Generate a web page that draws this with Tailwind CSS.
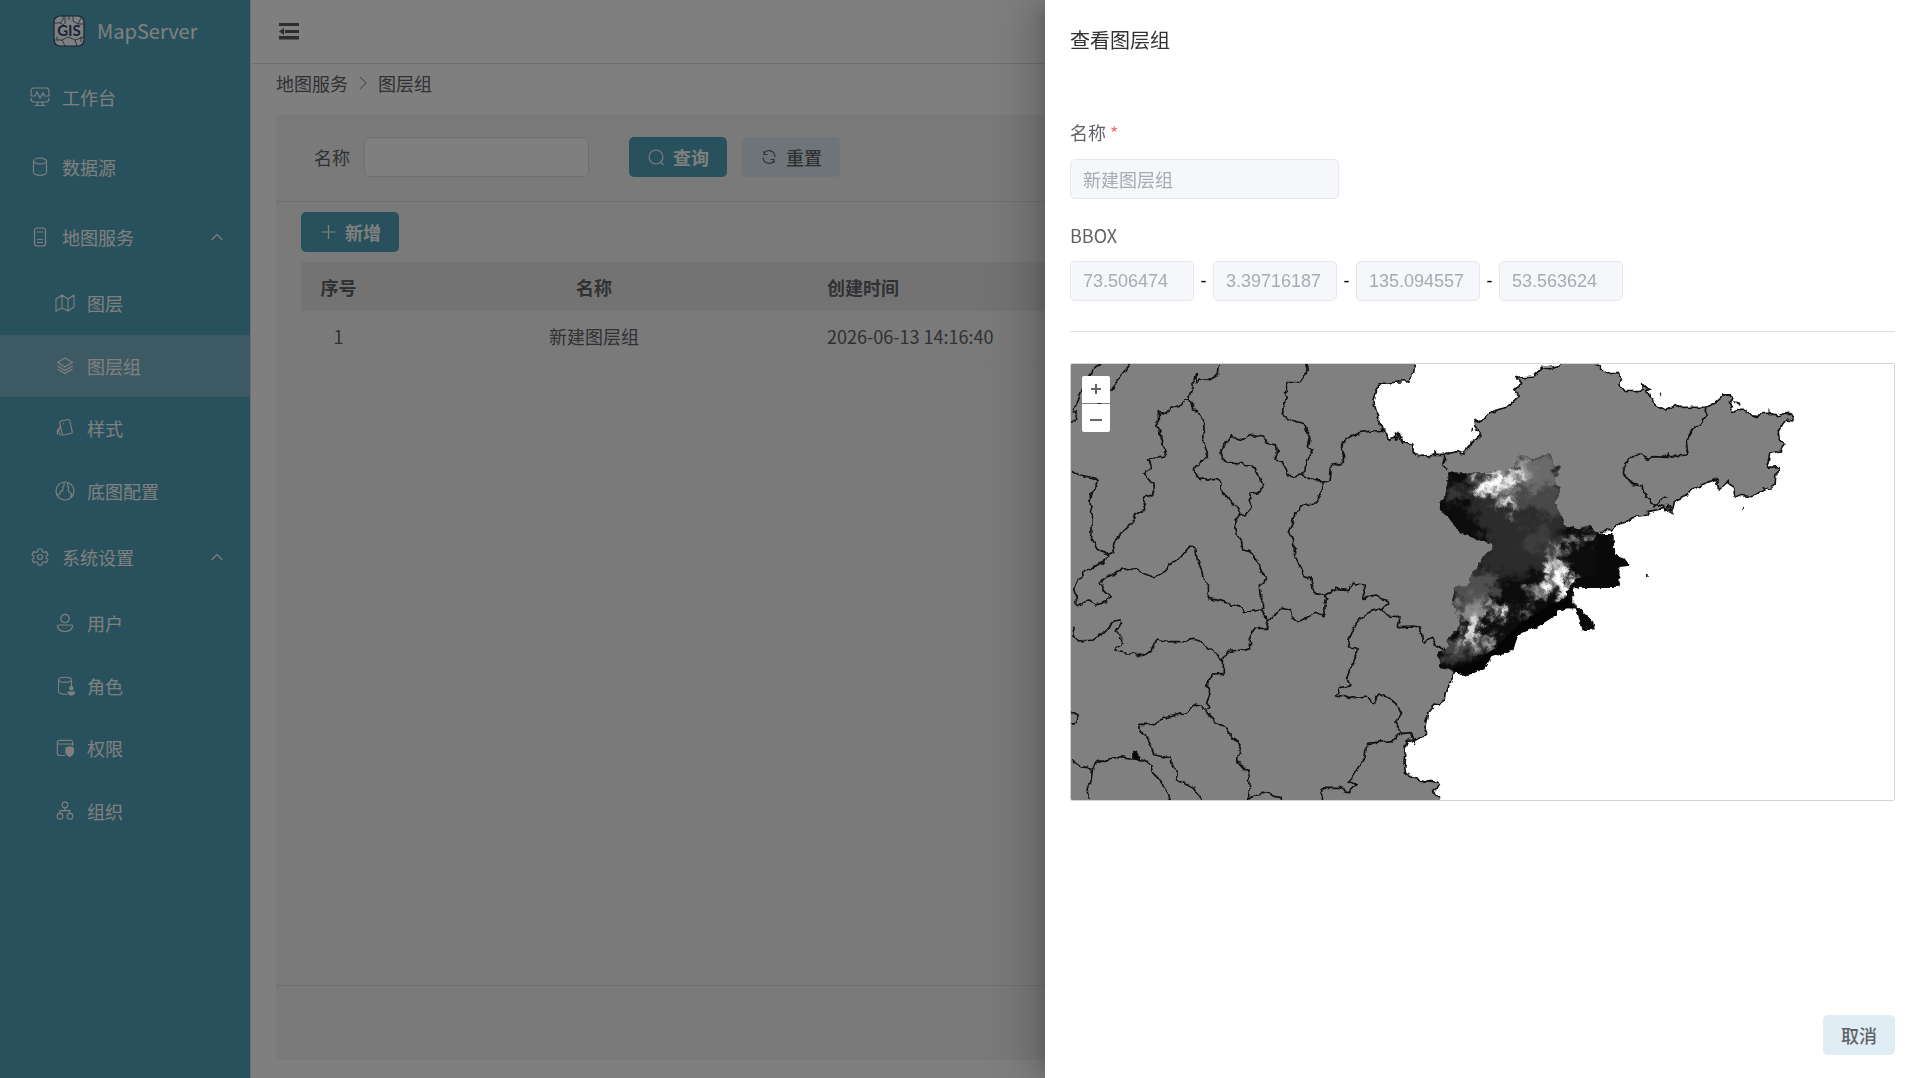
<!DOCTYPE html>
<html class="h-full" lang="zh-CN">
    <head>
        <meta charset="UTF-8" />
        <meta name="viewport" content="width=device-width, initial-scale=1.0" />
        <title>MapServer</title>
        <script src="https://cdn.jsdelivr.net/npm/@tailwindcss/browser@4"></script>
    </head>
    <body class="h-full overflow-hidden bg-white font-['Noto_Sans_CJK_SC',sans-serif] text-[18px] leading-6 text-[#606266]">
        <div class="flex h-full">
            <!-- sidebar -->
            <aside class="w-[250px] shrink-0 bg-[#50a3ba] text-white">
                <a href="#" class="flex h-[62px] items-center gap-3 pl-[53px] text-xl">
                    <svg class="size-8" viewBox="0 0 32 32" fill="none" stroke="#2c4a6e">
                        <rect x="1" y="1" width="30" height="30" rx="6" fill="#fff" stroke-width="1.2" />
                        <path stroke-width=".8" d="M1 8h6l3-3V1M7 8l4 2M20 1v5l5 3h6M12 1v8M25 9l3-6M1 25h8l3 6M9 25l6-3V20M15 22l7 3 2 6M22 25l9-3M28 21v6M4 21v4M16 1v4" />
                        <path fill="#fff" stroke="none" d="M3 10.500h26v11H3z" />
                        <text x="16" y="21" text-anchor="middle" font-family="Lato, sans-serif" font-size="15" font-weight="700" fill="#2c4a6e" stroke="none">GIS</text>
                    </svg>
                    <span>MapServer</span>
                </a>
                <nav>
                    <a href="#" class="flex h-[70px] items-center gap-3 pl-[30px]">
                        <svg class="size-5" viewBox="0 0 20 20" fill="none" stroke="currentColor" stroke-width="1.2">
                            <path d="M1 9V4a3 3 0 0 1 3-3h12a3 3 0 0 1 3 3v5M1 9h4l2-4 3 6 3-5 1.500 3H19M1 11v1a3 3 0 0 0 3 3h12a3 3 0 0 0 3-3v-1M7.500 15v3.500M12.500 15v3.500M4.500 18.500h11" />
                        </svg>
                        <span>工作台</span>
                    </a>
                    <a href="#" class="flex h-[70px] items-center gap-3 pl-[30px]">
                        <svg class="size-5" viewBox="0 0 20 20" fill="none" stroke="currentColor" stroke-width="1.1">
                            <ellipse cx="10" cy="4" rx="6.500" ry="3" />
                            <path d="M3.500 4v11.500C3.500 17 6.500 18.300 10 18.300s6.500-1.300 6.500-2.800V4" />
                        </svg>
                        <span>数据源</span>
                    </a>
                    <a href="#" class="flex h-[70px] items-center gap-3 pr-[26px] pl-[30px]">
                        <svg class="size-5" viewBox="0 0 20 20" fill="none" stroke="currentColor" stroke-width="1.2">
                            <rect x="4.500" y="1" width="11" height="18" rx="2.500" />
                            <path d="M7 5h6M7 12.500h6M7 15.500h6" />
                        </svg>
                        <span class="grow">地图服务</span>
                        <svg class="size-3.5" viewBox="0 0 14 14" fill="none" stroke="currentColor" stroke-width="1.1"><path d="M1.500 10 7 4.500l5.500 5.500" /></svg>
                    </a>
                    <div class="grid h-[250px] auto-rows-fr">
                        <a href="#" class="flex items-center gap-3 pl-[55px]">
                            <svg class="size-5" viewBox="0 0 20 20" fill="none" stroke="currentColor" stroke-width="1.1" stroke-linejoin="round">
                                <path d="M1 6l6-4 6 4 6-4v12l-6 4-6-3-6 3zM7 2v13M13 6v12" />
                            </svg>
                            <span>图层</span>
                        </a>
                        <a href="#" class="flex items-center gap-3 bg-[#7ab3c8] pl-[55px]">
                            <svg class="size-5" viewBox="0 0 20 20" fill="none" stroke="currentColor" stroke-width="1.2" stroke-linejoin="round">
                                <path d="M10 2l7.500 4.500L10 11 2.500 6.500zM2.500 10l7.500 4.500L17.500 10M2.500 13l7.500 4.500L17.500 13" />
                            </svg>
                            <span>图层组</span>
                        </a>
                        <a href="#" class="flex items-center gap-3 pl-[55px]">
                            <svg class="size-5" viewBox="0 0 20 20" fill="none" stroke="currentColor" stroke-width="1.1" stroke-linejoin="round">
                                <path d="M6 3l7-1.500a1.500 1.500 0 0 1 1.700 1.200l2.500 11a1.500 1.500 0 0 1-1.200 1.800l-7 1.500a1.500 1.500 0 0 1-1.700-1.200L4.800 4.800A1.500 1.500 0 0 1 6 3zM5 8l-1.300 5.500 1 3 2 .7M3.500 10.500L2 14l.8 2.500" />
                                <circle cx="8.500" cy="5.800" r=".7" fill="currentColor" stroke="none" />
                            </svg>
                            <span>样式</span>
                        </a>
                        <a href="#" class="flex items-center gap-3 pl-[55px]">
                            <svg class="size-5" viewBox="0 0 20 20" fill="none" stroke="currentColor" stroke-width="1.200">
                                <circle cx="10" cy="10" r="9" />
                                <path d="M9 1.500c.5 2 0 3.500-1 4.500S9 8.500 7.500 9.500 5 10.500 5 12s-1.500 1.500-2.500 2M13 1.800c-1 1.700 0 2.700.5 4.200s-1 3 0 4.500 3 1 3 2.500-1.500 2-1 3.500" />
                            </svg>
                            <span>底图配置</span>
                        </a>
                    </div>
                    <a href="#" class="flex h-[70px] items-center gap-3 pr-[26px] pl-[30px]">
                        <svg class="size-5" viewBox="0 0 20 20" fill="none" stroke="currentColor" stroke-width="1.200" stroke-linejoin="round">
                            <path d="M8.200 2h3.600l.5 2.500 1.600.9 2.400-.8 1.700 3-1.800 1.600v1.800l1.800 1.600-1.700 3-2.400-.8-1.600.9-.5 2.500H8.200l-.5-2.500-1.600-.9-2.400.8-1.700-3L3.800 11V9.200L2 7.600l1.700-3 2.400.8 1.600-.9z" />
                            <circle cx="10" cy="10" r="2.500" />
                        </svg>
                        <span class="grow">系统设置</span>
                        <svg class="size-3.5" viewBox="0 0 14 14" fill="none" stroke="currentColor" stroke-width="1.1"><path d="M1.500 10 7 4.500l5.500 5.500" /></svg>
                    </a>
                    <div class="grid h-[250px] auto-rows-fr">
                        <a href="#" class="flex items-center gap-3 pl-[55px]">
                            <svg class="size-5" viewBox="0 0 20 20" fill="none" stroke="currentColor" stroke-width="1.2">
                                <circle cx="10" cy="5.500" r="4.200" />
                                <path d="M3.500 12h13c1 0 1.200.8 1 1.500-.8 3-3.500 5-7.500 5s-6.700-2-7.500-5c-.2-.7 0-1.500 1-1.500z" />
                            </svg>
                            <span>用户</span>
                        </a>
                        <a href="#" class="flex items-center gap-3 pl-[55px]">
                            <svg class="size-5" viewBox="0 0 20 20" fill="none" stroke="currentColor" stroke-width="1.1">
                                <ellipse cx="10" cy="3.800" rx="6.500" ry="2.600" />
                                <path d="M3.500 4v11.500c0 1.500 2.500 2.500 6.500 2.700h2M16.500 4v6" />
                                <g fill="currentColor" stroke="none">
                                    <circle cx="16.300" cy="12.300" r="2.300" />
                                    <path d="M12.800 15.500h7c.6 0 .6 4-3.500 4s-4.100-4-3.500-4z" />
                                </g>
                            </svg>
                            <span>角色</span>
                        </a>
                        <a href="#" class="flex items-center gap-3 pl-[55px]">
                            <svg class="size-5" viewBox="0 0 20 20" fill="none" stroke="currentColor" stroke-width="1.2">
                                <path d="M10 17.500H4.500a2.200 2.200 0 0 1-2.200-2.200V4.500a2.200 2.200 0 0 1 2.200-2.200h11a2.200 2.200 0 0 1 2.200 2.200V8M2.300 6h15.400" />
                                <path fill="currentColor" stroke="none" d="M14.700 8l4.300 1.700v4.300c0 2.500-2 4-4.300 5-2.300-1-4.300-2.500-4.300-5V9.700z" />
                            </svg>
                            <span>权限</span>
                        </a>
                        <a href="#" class="flex items-center gap-3 pl-[55px]">
                            <svg class="size-5" viewBox="0 0 20 20" fill="none" stroke="currentColor" stroke-width="1.1">
                                <circle cx="10" cy="4" r="2.900" />
                                <circle cx="5" cy="15.300" r="2.900" />
                                <circle cx="15" cy="15.300" r="2.900" />
                                <path d="M10 7v2.500M5 12.300V9.600h10v2.700" />
                            </svg>
                            <span>组织</span>
                        </a>
                    </div>
                </nav>
            </aside>

            <!-- page content -->
            <div class="flex min-w-0 grow flex-col border-l border-[#dcdfe6]">
                <header class="flex h-16 shrink-0 items-center border-b border-[#dcdfe6] pl-7">
                    <button type="button" aria-label="收起菜单">
                        <svg class="h-[17px] w-5" viewBox="0 0 20 17" fill="#5a5a5a">
                            <path d="M0 0h20v3H0zM6 7h14v3H6zM0 13h20v3.500H0zM0 8.500L5 5v7z" />
                        </svg>
                    </button>
                </header>
                <main class="flex grow flex-col px-[25px] pt-[7px] pb-[18px]">
                    <nav class="flex items-center gap-1.5 pb-5">
                        <a href="#">地图服务</a>
                        <svg class="size-[18px] text-[#a8abb2]" viewBox="0 0 18 18" fill="none" stroke="currentColor" stroke-width="1.200"><path d="M6 3l6 6-6 6" /></svg>
                        <span>图层组</span>
                    </nav>
                    <section class="flex grow flex-col bg-[#f4f4f4]">
                        <form class="flex items-center border-b border-[#dcdfe6] pt-[22px] pb-6 pl-[38px]">
                            <label for="query-name" class="mr-[14px]">名称</label>
                            <input id="query-name" class="mr-10 h-10 w-[225px] rounded-[5px] border border-[#dcdfe6] bg-white px-3" />
                            <button type="button" class="mr-[15px] flex h-10 items-center gap-2 rounded-[5px] bg-[#50a3ba] px-[18px] font-bold text-white">
                                <svg class="size-[18px]" viewBox="0 0 18 18" fill="none" stroke="currentColor" stroke-width="1.1"><circle cx="9" cy="9" r="7" /><path d="M13.500 14l3 3" /></svg>
                                查询
                            </button>
                            <button type="button" class="flex h-10 items-center gap-2 rounded-[5px] bg-[#dcebf1] px-[18px] font-medium">
                                <svg class="size-[18px]" viewBox="0 0 18 18" fill="none" stroke="currentColor" stroke-width="1.200"><path d="M4 3v3.500h3.500M3.500 6.500A5.900 5.900 0 0 1 14.900 9M14 15v-3.500h-3.500M14.500 11.500A5.900 5.900 0 0 1 3.100 9.500" /></svg>
                                重置
                            </button>
                        </form>
                        <div class="flex grow flex-col items-start px-[25px] pt-2.5">
                            <button type="button" class="mb-2.5 flex h-10 items-center gap-2 rounded-[5px] bg-[#50a3ba] px-[18px] font-bold text-white">
                                <svg class="size-[18px]" viewBox="0 0 18 18" fill="none" stroke="currentColor" stroke-width="1.200"><path d="M9.500 2v14M2.500 9h14" /></svg>
                                新增
                            </button>
                            <table class="w-full table-fixed">
                                <thead class="bg-[#e6e6e6]">
                                    <tr class="h-[49px]">
                                        <th class="w-[75px] font-bold">序号</th>
                                        <th class="w-[436px] font-bold">名称</th>
                                        <th class="pl-[15px] text-left font-bold">创建时间</th>
                                    </tr>
                                </thead>
                                <tbody>
                                    <tr class="h-[50px] border-b border-[#ebeef5]">
                                        <td class="text-center">1</td>
                                        <td class="text-center">新建图层组</td>
                                        <td class="pl-[15px]">2026-06-13 14:16:40</td>
                                    </tr>
                                </tbody>
                            </table>
                        </div>
                        <footer class="h-[75px] shrink-0 border-t border-[#dcdfe6]"></footer>
                    </section>
                </main>
            </div>
        </div>

        <!-- drawer -->
        <div class="fixed inset-0 flex justify-end overflow-hidden bg-black/50">
            <section role="dialog" aria-labelledby="drawer-title" class="flex h-full w-[873px] max-w-full flex-col bg-white pr-[23px] pb-[23px] pl-[25px] shadow-[-16px_0_48px_16px_rgba(0,0,0,0.08),-12px_0_32px_rgba(0,0,0,0.12),-8px_0_16px_-8px_rgba(0,0,0,0.16)]">
                <h2 id="drawer-title" class="pt-7 text-xl leading-6 text-[#303133]">查看图层组</h2>
                <form class="mt-[68px] flex flex-col border-b border-[#dcdfe6] pb-[30px]">
                    <label for="group-name">名称 <span class="text-[#f56c6c]">*</span></label>
                    <input id="group-name" disabled value="新建图层组" class="mt-[15px] h-10 w-[269px] rounded-[5px] border border-[#e4e7ed] bg-[#f5f7fa] px-3 font-['Liberation_Sans','Noto_Sans_CJK_SC',sans-serif] text-[#a8abb2]" />
                    <label for="min-x" class="mt-6">BBOX</label>
                    <div class="mt-[14px] flex items-center font-['Liberation_Sans',sans-serif] text-black">
                        <input id="min-x" disabled value="73.506474" class="h-10 w-[124px] rounded-[5px] border border-[#e4e7ed] bg-[#f5f7fa] px-3 text-[#a8abb2]" />
                        <span class="w-[19px] text-center">-</span>
                        <input aria-label="min y" disabled value="3.39716187" class="h-10 w-[124px] rounded-[5px] border border-[#e4e7ed] bg-[#f5f7fa] px-3 text-[#a8abb2]" />
                        <span class="w-[19px] text-center">-</span>
                        <input aria-label="max x" disabled value="135.094557" class="h-10 w-[124px] rounded-[5px] border border-[#e4e7ed] bg-[#f5f7fa] px-3 text-[#a8abb2]" />
                        <span class="w-[19px] text-center">-</span>
                        <input aria-label="max y" disabled value="53.563624" class="h-10 w-[124px] rounded-[5px] border border-[#e4e7ed] bg-[#f5f7fa] px-3 text-[#a8abb2]" />
                    </div>
                </form>

                <!-- map preview -->
                <div class="relative mt-[31px] h-[438px] overflow-hidden rounded-xs border border-[#d4d4d4]">
                    <svg class="size-full" viewBox="33 42 2469 1308" preserveAspectRatio="xMinYMin slice">
                        <defs>
                            <filter id="rough" x="-2%" y="-2%" width="104%" height="104%" color-interpolation-filters="sRGB">
                                <feTurbulence type="fractalNoise" baseFrequency="0.04" numOctaves="2" seed="7" />
                                <feDisplacementMap in="SourceGraphic" scale="20" xChannelSelector="R" yChannelSelector="G" />
                                <feGaussianBlur stdDeviation="1.300" />
                            </filter>
                            <filter id="relief" x="-10%" y="-10%" width="120%" height="120%" color-interpolation-filters="sRGB">
                                <feGaussianBlur in="SourceGraphic" stdDeviation="11" result="soft" />
                                <feTurbulence type="fractalNoise" baseFrequency="0.03" numOctaves="4" seed="3" result="noise" />
                                <feDisplacementMap in="soft" in2="noise" scale="90" xChannelSelector="R" yChannelSelector="G" />
                                <feGaussianBlur stdDeviation="2" />
                            </filter>
                            <filter id="edge" x="-5%" y="-5%" width="110%" height="110%" color-interpolation-filters="sRGB">
                                <feTurbulence type="fractalNoise" baseFrequency="0.07" numOctaves="2" seed="5" />
                                <feDisplacementMap in="SourceGraphic" scale="14" xChannelSelector="R" yChannelSelector="G" />
                            </filter>
                            <clipPath id="dem">
                                <path d="M262 362L300 370 370 370 415 360 445 362 465 345 475 315 500 320 515 328 545 320 570 310 578 330 580 350 600 350 595 372 580 380 592 405 602 412 595 440 582 460 600 490 612 520 620 535 640 528 655 535 690 525 705 545 720 552 760 552 762 600 775 620 795 628 810 647 778 650 778 710 745 710 745 714 685 714 640 712 640 760 700 815 704 838 668 841 655 795 645 775 620 775 600 780 580 800 530 832 475 852 460 900 440 910 395 920 370 960 310 978 285 962 240 955 233 905 265 895 260 870 285 845 300 825 288 780 275 760 285 710 325 710 330 680 345 660 370 620 395 600 395 580 370 575 300 550 285 530 260 495 240 480 238 455 255 440 262 400z" />
                            </clipPath>
                        </defs>
                        <rect x="0" y="0" width="2600" height="1360" fill="#fff" />
                        <g filter="url(#rough)" stroke="#111" stroke-width="5" fill="none" stroke-linejoin="round">
                            <rect x="0" y="0" width="2300" height="1400" fill="#808080" stroke="none" />
                            <!-- sea -->
                            <g fill="#fff" stroke="none" transform="translate(1620 0)">
                                <path d="M-10 20L0 50 20 68 60 68 60 105 75 124 110 125 130 118 128 104 155 118 140 122 145 138 160 148 165 165 197 184 205 174 225 164 240 172 320 171 345 160 365 142 385 136 398 146 388 155 400 186 415 178 430 178 442 194 470 196 505 192 530 198 550 192 570 190 582 202 575 210 555 207 545 225 535 245 538 265 552 285 540 303 510 310 502 345 500 352 540 350 528 370 525 405 510 415 490 408 495 422 470 430 457 440 405 435 400 415 385 405 385 393 357 420 348 388 270 418 258 438 220 455 215 480 190 475 145 485 140 495 100 500 90 510 60 518 20 548 0 548 -60 600 -100 740 -250 830 -330 900 -435 965 -450 1000 -455 1015 -462 1030 -464 1048 -475 1055 -480 1068 -495 1065 -515 1090 -522 1110 -525 1130 -517 1148 -530 1162 -560 1168 -575 1175 -585 1200 -588 1240 -583 1270 -560 1285 -530 1292 -505 1288 -492 1295 -485 1310 -502 1325 -480 1342 -460 1400 1000 1400 1000 0z" />
                            </g>
                            <g transform="translate(1620 0)">
                                <path d="M-10 42L0 50 20 68 60 68 60 105 75 124 110 125 130 118 128 104 155 118 140 122 145 138 160 148 165 165 197 184 205 174 225 164 240 172 320 171 345 160 365 142 365 132 370 142 385 136 398 146 388 155 400 186 415 178 430 178 442 194 470 196 505 192 505 178 507 192 530 198 550 192 570 190 582 202 575 210 555 207 545 225 535 245 538 265 552 285 540 303 510 310 502 345 500 352 540 350 528 370 525 405 510 415 490 408 495 422 470 430 457 440 405 435 400 415 385 405 385 393 357 420 348 388 270 418 258 438 220 455 215 480 190 475 145 485 140 495 100 500 90 510 60 518 20 548 0 548M-435 965L-450 1000 -455 1015 -462 1030 -464 1048 -475 1055 -480 1068 -495 1065 -515 1090 -522 1110 -525 1130 -517 1148 -530 1162 -560 1168 -575 1175 -585 1200 -588 1240 -583 1270 -560 1285 -530 1292 -505 1288 -492 1295 -485 1310 -502 1325 -480 1342" />
                                <path d="M320 172L318 195 300 225 275 245 262 270 265 300 255 315 238 318 235 324 228 314 215 322 205 312 205 322 160 320 145 325 120 312 105 315 75 340 70 370 95 400 130 405 132 440 165 462 190 470 195 482 205 468 220 488M160 472L175 455 200 440M-530 1292L-492 1295" />
                                <path stroke-width="6" d="M365 138h28M400 156l18 5M555 193h22M180 136l6-3M428 473h5M138 675h5M-528 1293h30" />
                            </g>
                            <g transform="translate(900 0)">
                                <path fill="#fff" d="M170 20L163 42 150 95 120 96 65 100 48 125 42 155 50 190 60 215 62 238 78 245 85 268 105 262 115 250 128 260 130 278 158 285 160 305 172 320 225 316 225 305 227 316 250 316 290 305 310 312 335 280 355 265 358 250 345 232 342 212 375 205 395 185 440 172 475 140 465 122 485 100 470 82 520 78 548 52 575 52 600 46 620 20z" />
                                <path d="M255 318L248 345 265 360M106 250L110 270 120 255 128 285" />
                                <path stroke-width="6" d="M334 239h5M350 264h7" />
                            </g>
                            <!-- borders -->
                            <path d="M120 42L105 55 88 78 62 130 50 165 38 170 38 185 52 185 45 210 33 218M212 42L198 58 185 75 175 90 152 118 110 160M478 42L475 70 455 92 425 90 410 95 412 75 398 95 400 110 388 148 372 150 365 165 330 172 325 187 298 185 298 210 290 230 300 255 308 270 305 285 315 300 312 318 285 322 266 330 275 355 253 370 278 400 282 435 258 440 248 455 255 478 225 492 215 520 190 545 165 572 160 590 168 610 145 615" />
                            <path d="M388 148L400 180 412 182 430 215 435 265 430 275 445 325 405 345 400 360 420 388 470 385 485 395 488 430 520 462 540 478 535 497 555 495 575 470 568 455 572 430 600 425 612 403 600 390 575 345 520 340 485 330 480 312 495 285 512 257 550 268 575 253 610 258 622 280 650 285 652 310 645 330 670 335 680 370 700 385 725 372" />
                            <path d="M740 42L745 60 720 95 685 95 675 120 685 140 670 165 668 185 680 212 705 212 735 222 740 245 752 260 745 290 755 297 742 335 738 360 725 372 750 382 765 392 810 393 815 345 850 340 850 315 842 295 855 270 895 248 972 240M790 393L785 430 770 455 720 470 705 485 700 520 688 545 700 575 705 620 720 645 735 680 750 685 765 730 790 735 800 745 795 770 795 800 765 790 715 815 695 800 690 780 665 775 640 795 625 810" />
                            <path d="M33 360L60 375 108 385 115 395 100 420 90 455 97 500 95 565 115 598 145 615 130 640 100 652 70 670 38 715 45 735 55 770 85 750 105 765 140 755 148 735 130 720 120 700 130 685 180 662 220 657 255 672 285 683 318 662 325 645 350 635 390 588 408 595 412 630 425 660 430 690 445 705 445 745 480 752 545 772 550 787 605 780 610 795 625 808M535 497L525 515 530 550 545 575 548 600 570 605 595 635 605 665 618 680 612 698 598 705 600 735 607 755 608 780" />
                            <path d="M625 808L620 835 585 835 570 855 572 892 545 900 500 905 490 930 490 970 460 972 440 1005 450 1030 440 1055 450 1072 435 1082M490 935L430 878 400 868 370 875 325 875 290 867 275 900 250 917 220 912 165 903 165 890 185 882 185 860 165 840 185 825 183 810 165 812 130 848 100 870 60 873 40 860 35 830" />
                            <path d="M435 1082L425 1068 400 1065 380 1088 310 1105 275 1123 235 1123 240 1145 258 1160 275 1190 280 1215 330 1223 335 1250 355 1270 350 1285 400 1315 425 1350M435 1082L465 1115 490 1130 540 1185 530 1230 560 1265 570 1295 565 1345 590 1335 615 1328 660 1340 662 1350M33 1230L65 1250 98 1255 108 1240 165 1222 215 1227 245 1227 275 1245 280 1270 310 1305 320 1330 328 1350M98 1255L92 1300 83 1305 88 1350M33 1085L55 1095 45 1118 33 1120" />
                            <path d="M795 738L830 718 865 722 880 700 910 705 915 745 945 738 978 750 980 762 965 775 925 788 895 810 875 850 862 890 895 900 875 950 862 985 870 1005 840 1010 830 1035 870 1045 920 1038 940 1058 960 1035 985 1045 1010 1060 1025 1090 1008 1115 1025 1150 1055 1148 1060 1165 1060 1182M965 775L985 798 1020 800 1015 830 1065 828 1082 835 1088 878 1115 865 1140 898 1165 900M1025 1150L1005 1160 1000 1172 920 1180 915 1220 885 1270 870 1295 890 1305 865 1325 835 1315 800 1315 780 1330 785 1350" />
                            <path fill="#000" d="M222 1205l10 2 2 18-12 1z" />
                        </g>
                        <!-- elevation raster -->
                        <g transform="translate(900 0)">
                            <g filter="url(#edge)">
                            <g clip-path="url(#dem)">
                                <rect x="200" y="280" width="640" height="720" fill="#0c0c0c" />
                                <g filter="url(#relief)">
                                    <path fill="#2c2c2c" d="M330 360L600 300 620 560 570 650 460 680 340 680 380 560 320 460z" />
                                    <path fill="#484848" d="M340 360L600 300 610 500 520 490 420 450 330 440z" />
                                    <path fill="#6a6a6a" d="M450 310L590 300 600 400 480 430z" />
                                    <path fill="#3e3e3e" d="M500 530L590 540 570 610 480 600z" />
                                    <path fill="#9a9a9a" d="M470 310L500 320 520 370 480 390z" />
                                    <path fill="#fff" d="M375 360L415 362 432 400 400 445 355 440zM435 375L475 340 470 410 440 425zM425 450l40-5 5 30-40 5z" />
                                    <path fill="#3c3c3c" d="M260 410L310 400 310 450 260 460z" />
                                    <path fill="#505050" d="M275 700L350 670 420 690 380 800 280 800z" />
                                    <path fill="#8a8a8a" d="M290 780L350 730 370 780 310 850z" />
                                    <path fill="#444" d="M240 880L390 850 380 910 250 940z" />
                                    <path fill="#fff" d="M345 795L370 805 325 885 298 875zM375 855l22 5 8 38-18-5zM400 760l40 10 0 38-36-5zM565 645L605 635 640 700 628 750 590 740 550 705zM440 875h20v20h-20z" />
                                    <path fill="#bbb" d="M575 590l20 0 10 55-40 10zM670 540l35 5-5 35-25-5zM615 560l25 5-5 35-20-5zM510 715l45 0 0 25-45 5zM480 775l25 0 0 22-25 0z" />
                                </g>
                                <path fill="#0a0a0a" d="M712 540h110v180H650l-15 10 5 40 80 80-60-5-30-70-10-50 30-40 60-10z" />
                                <path fill="#040404" d="M480 820L560 770 620 740 640 760 640 790 560 830 470 870 450 910 340 970 300 990 270 960 360 930 400 900z" />
                            </g>
                            </g>
                        </g>
                    </svg>
                    <div class="absolute top-3 left-[11px] flex w-7 flex-col gap-px text-[#666]">
                        <button type="button" aria-label="Zoom in" class="flex h-[27px] items-center justify-center rounded-t-xs bg-white pb-0.5">
                            <svg class="size-3" viewBox="0 0 12 12" stroke="currentColor" stroke-width="2"><path d="M6 1v10M1 6h10" /></svg>
                        </button>
                        <button type="button" aria-label="Zoom out" class="flex h-7 items-center justify-center rounded-b-xs bg-white">
                            <svg class="size-3" viewBox="0 0 12 12" stroke="currentColor" stroke-width="2"><path d="M0 8h12" /></svg>
                        </button>
                    </div>
                </div>
                <button type="button" class="mt-auto h-10 w-[72px] self-end rounded-[5px] bg-[#e0edf5] font-medium">取消</button>
            </section>
        </div>
    </body>
</html>
